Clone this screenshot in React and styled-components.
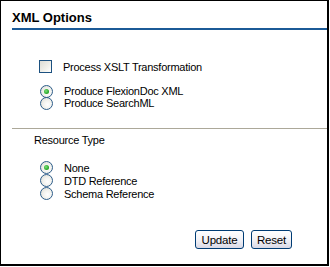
import React from "react";
import styled, { createGlobalStyle } from "styled-components";

const Global = createGlobalStyle`
  html, body { margin: 0; padding: 0; background: #fff; }
  body { font-family: Tahoma, "Liberation Sans", Arial, sans-serif; }
`;

const Panel = styled.div`
  box-sizing: border-box;
  width: 329px;
  height: 266px;
  border-style: solid;
  border-color: #000;
  border-width: 1px 2px 2px 1px;
  background: #fff;
  display: flex;
  flex-direction: column;
`;

const Header = styled.div`
  margin-left: 11px;
  padding-top: 9px;
  padding-bottom: 2px;
  border-bottom: 2px solid #1b5a97;
  font-size: 13px;
  font-weight: bold;
  line-height: 16px;
  color: #000;
`;

const Section = styled.div`
  display: flex;
  flex-direction: column;
  margin-top: ${(p) => p.$top}px;
  padding-left: ${(p) => p.$left ?? 38}px;
`;

const Row = styled.label`
  display: flex;
  align-items: center;
  height: ${(p) => p.$h ?? 12}px;
  font-size: 11px;
  color: #000;
  letter-spacing: -0.25px;
`;

const Box = styled.span`
  box-sizing: border-box;
  width: 13px;
  height: 13px;
  border: 1px solid #1c5180;
  background: linear-gradient(135deg, #dcdcd5 0%, #f0f0ea 60%, #fff 100%);
  flex: none;
  margin-right: 11px;
`;

const Radio = styled.span`
  box-sizing: border-box;
  width: 13px;
  height: 13px;
  border-radius: 50%;
  border: 1px solid #2d5d8a;
  background: radial-gradient(circle at 60% 60%, #fff 0%, #f2f2ee 45%, #d8d8d0 100%);
  flex: none;
  margin-right: 11px;
  margin-left: 1px;
  display: flex;
  align-items: center;
  justify-content: center;
  &::after {
    content: "";
    display: ${(p) => (p.$checked ? "block" : "none")};
    width: 5px;
    height: 5px;
    border-radius: 50%;
    background: radial-gradient(circle at 40% 40%, #7be07b 0%, #21a121 70%, #1a7d1a 100%);
  }
`;

const Separator = styled.div`
  margin-top: ${(p) => p.$top}px;
  margin-left: 11px;
  height: 1px;
  background: #aca899;
`;

const Label = styled.div`
  margin-top: 5px;
  padding-left: 33px;
  font-size: 11px;
  line-height: 13px;
  letter-spacing: -0.25px;
  color: #000;
`;

const Buttons = styled.div`
  display: flex;
  justify-content: flex-end;
  gap: 7px;
  margin-top: 30px;
  margin-right: 35px;
`;

const Button = styled.button`
  box-sizing: border-box;
  height: 19px;
  width: ${(p) => p.$w}px;
  padding: 0;
  border: 1px solid #003c74;
  border-radius: 3px;
  background: linear-gradient(180deg, #ffffff 0%, #f3f3f7 50%, #d9d9e6 100%);
  font-family: Tahoma, "Liberation Sans", Arial, sans-serif;
  font-size: 11.5px;
  color: #000;
  letter-spacing: -0.2px;
`;

export default function App() {
  return (
    <>
      <Global />
      <Panel>
        <Header>XML Options</Header>
        <Section $top={30}>
          <Row $h={13}>
            <Box />
            Process XSLT Transformation
          </Row>
        </Section>
        <Section $top={12}>
          <Row>
            <Radio $checked />
            Produce FlexionDoc XML
          </Row>
          <Row>
            <Radio />
            Produce SearchML
          </Row>
        </Section>
        <Separator $top={19} />
        <Label>Resource Type</Label>
        <Section $top={14}>
          <Row $h={13}>
            <Radio $checked />
            None
          </Row>
          <Row $h={13}>
            <Radio />
            DTD Reference
          </Row>
          <Row $h={13}>
            <Radio />
            Schema Reference
          </Row>
        </Section>
        <Buttons>
          <Button $w={49}>Update</Button>
          <Button $w={41}>Reset</Button>
        </Buttons>
      </Panel>
    </>
  );
}
